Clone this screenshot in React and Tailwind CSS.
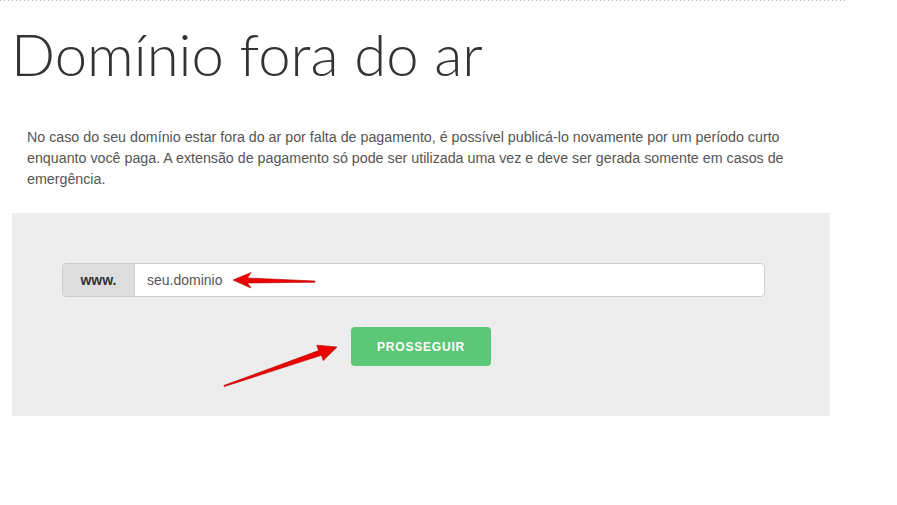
import React from 'react';

function Arrows() {
  return (
    <svg className="absolute inset-0 pointer-events-none" width="897" height="505" viewBox="0 0 897 505">
      <polygon
        points="233,280 251,272.5 247.5,278 315,281 315,282.2 247.5,283 251,288"
        fill="#ee0000"
        stroke="#b00000"
        strokeWidth="0.6"
        strokeLinejoin="round"
      />
      <polygon
        points="223.8,385.5 318.6,350.6 316.8,345.2 337,347 323.2,360.6 321.4,355.3 224.3,386.6"
        fill="#ee0000"
        stroke="#b00000"
        strokeWidth="0.6"
        strokeLinejoin="round"
      />
    </svg>
  );
}

export default function App() {
  return (
    <div className="relative w-[897px] h-[505px] bg-white font-['Liberation_Sans',Arial,sans-serif]">
      <div className="w-[845px] h-px bg-[repeating-linear-gradient(90deg,#b5b5b5_0_1px,transparent_1px_4px)]" />
      <div className="pl-[12px] w-[830px]">
        <h1 className="mt-[24px] ml-[-1px] h-[58px] text-[58px] leading-none font-light text-[#333] font-['Lato',sans-serif]">
          Domínio fora do ar
        </h1>
        <p className="mt-[44px] px-[15px] text-[14.25px] leading-[21px] text-[#555]">
          No caso do seu domínio estar fora do ar por falta de pagamento, é possível publicá-lo novamente por um período curto
          enquanto você paga. A extensão de pagamento só pode ser utilizada uma vez e deve ser gerada somente em casos de
          emergência.
        </p>
        <div className="mt-[23px] bg-[#ededed] h-[203px] pt-[50px] flex flex-col">
          <div className="ml-[50px] w-[703px] h-[34px] flex rounded-[4px] border border-[#cccccc] bg-white overflow-hidden">
            <div className="w-[72px] flex items-center justify-center bg-[#dddddd] border-r border-[#cccccc] text-[14px] font-bold text-[#333]">
              www.
            </div>
            <div className="flex-1 flex items-center pl-[12px] text-[14px] text-[#555]">seu.dominio</div>
          </div>
          <div className="mt-[30px] flex justify-center">
            <button className="w-[140px] h-[39px] rounded-[4px] bg-[#5cc776] text-white text-[12px] font-bold tracking-[0.8px]">
              PROSSEGUIR
            </button>
          </div>
        </div>
      </div>
      <Arrows />
    </div>
  );
}
